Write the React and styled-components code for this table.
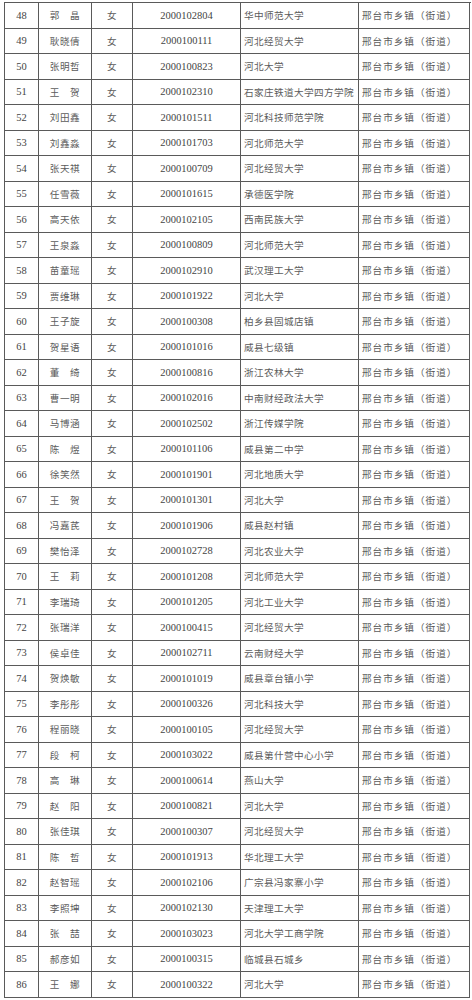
import React from 'react'
import styled, { createGlobalStyle } from 'styled-components'

const ROWS = [
  [48, '郭　晶', '2000102804', '华中师范大学'],
  [49, '耿晓倩', '2000100111', '河北经贸大学'],
  [50, '张明哲', '2000100823', '河北大学'],
  [51, '王　贺', '2000102310', '石家庄铁道大学四方学院'],
  [52, '刘田鑫', '2000101511', '河北科技师范学院'],
  [53, '刘鑫淼', '2000101703', '河北师范大学'],
  [54, '张天祺', '2000100709', '河北经贸大学'],
  [55, '任雪薇', '2000101615', '承德医学院'],
  [56, '高天依', '2000102105', '西南民族大学'],
  [57, '王泉淼', '2000100809', '河北师范大学'],
  [58, '苗童瑶', '2000102910', '武汉理工大学'],
  [59, '贾维琳', '2000101922', '河北大学'],
  [60, '王子旋', '2000100308', '柏乡县固城店镇'],
  [61, '贺星语', '2000101016', '威县七级镇'],
  [62, '董　绮', '2000100816', '浙江农林大学'],
  [63, '曹一明', '2000102016', '中南财经政法大学'],
  [64, '马博涵', '2000102502', '浙江传媒学院'],
  [65, '陈　煜', '2000101106', '威县第二中学'],
  [66, '徐笑然', '2000101901', '河北地质大学'],
  [67, '王　贺', '2000101301', '河北大学'],
  [68, '冯嘉芪', '2000101906', '威县赵村镇'],
  [69, '樊怡泽', '2000102728', '河北农业大学'],
  [70, '王　莉', '2000101208', '河北师范大学'],
  [71, '李瑞琦', '2000101205', '河北工业大学'],
  [72, '张瑞洋', '2000100415', '河北经贸大学'],
  [73, '侯卓佳', '2000102711', '云南财经大学'],
  [74, '贺焕敏', '2000101019', '威县章台镇小学'],
  [75, '李彤彤', '2000100326', '河北科技大学'],
  [76, '程丽晓', '2000100105', '河北经贸大学'],
  [77, '段　柯', '2000103022', '威县第什营中心小学'],
  [78, '高　琳', '2000100614', '燕山大学'],
  [79, '赵　阳', '2000100821', '河北大学'],
  [80, '张佳琪', '2000100307', '河北经贸大学'],
  [81, '陈　哲', '2000101913', '华北理工大学'],
  [82, '赵智瑶', '2000102106', '广宗县冯家寨小学'],
  [83, '李照坤', '2000102130', '天津理工大学'],
  [84, '张　喆', '2000103023', '河北大学工商学院'],
  [85, '郝彦如', '2000100315', '临城县石城乡'],
  [86, '王　娜', '2000100322', '河北大学'],
]

const GlobalStyle = createGlobalStyle`
  body {
    margin: 0;
    background: #fff;
  }
`

const Page = styled.div`
  padding: 2px 0 0 4px;
  width: 472px;
  box-sizing: border-box;
`

const Table = styled.div`
  display: grid;
  grid-template-columns: 34px 53px 41px 108px 118px 111px;
  grid-auto-rows: 25.5px;
  width: 466px;
  border-top: 1px solid #5a5a5a;
  border-left: 1px solid #5a5a5a;
`

const Cell = styled.div`
  display: flex;
  align-items: center;
  justify-content: ${p => (p.$left ? 'flex-start' : 'center')};
  padding-left: ${p => (p.$left ? '3px' : '0')};
  border-right: 1px solid #5a5a5a;
  border-bottom: 1px solid #5a5a5a;
  box-sizing: border-box;
  overflow: hidden;
  white-space: nowrap;
  color: ${p => (p.$serif ? '#444' : '#5c5c5c')};
  font-family: ${p => (p.$serif
    ? '"Liberation Serif", "Noto Sans CJK SC", serif'
    : '"Noto Sans CJK SC", sans-serif')};
  font-size: ${p => (p.$serif ? '10.5px' : '9.6px')};
  letter-spacing: ${p => (p.$serif ? '0' : `${p.$spacing || 0.5}px`)};
`

const Row = ({ row }) => {
  const [no, name, code, school] = row
  return (
    <>
      <Cell $serif>{no}</Cell>
      <Cell $spacing={0.6}>{name}</Cell>
      <Cell>女</Cell>
      <Cell $serif>{code}</Cell>
      <Cell $left $spacing={0.4}>{school}</Cell>
      <Cell $left $spacing={1}>邢台市乡镇（街道）</Cell>
    </>
  )
}

export default function App() {
  return (
    <Page>
      <GlobalStyle />
      <Table>
        {ROWS.map(row => <Row key={row[0]} row={row} />)}
      </Table>
    </Page>
  )
}
